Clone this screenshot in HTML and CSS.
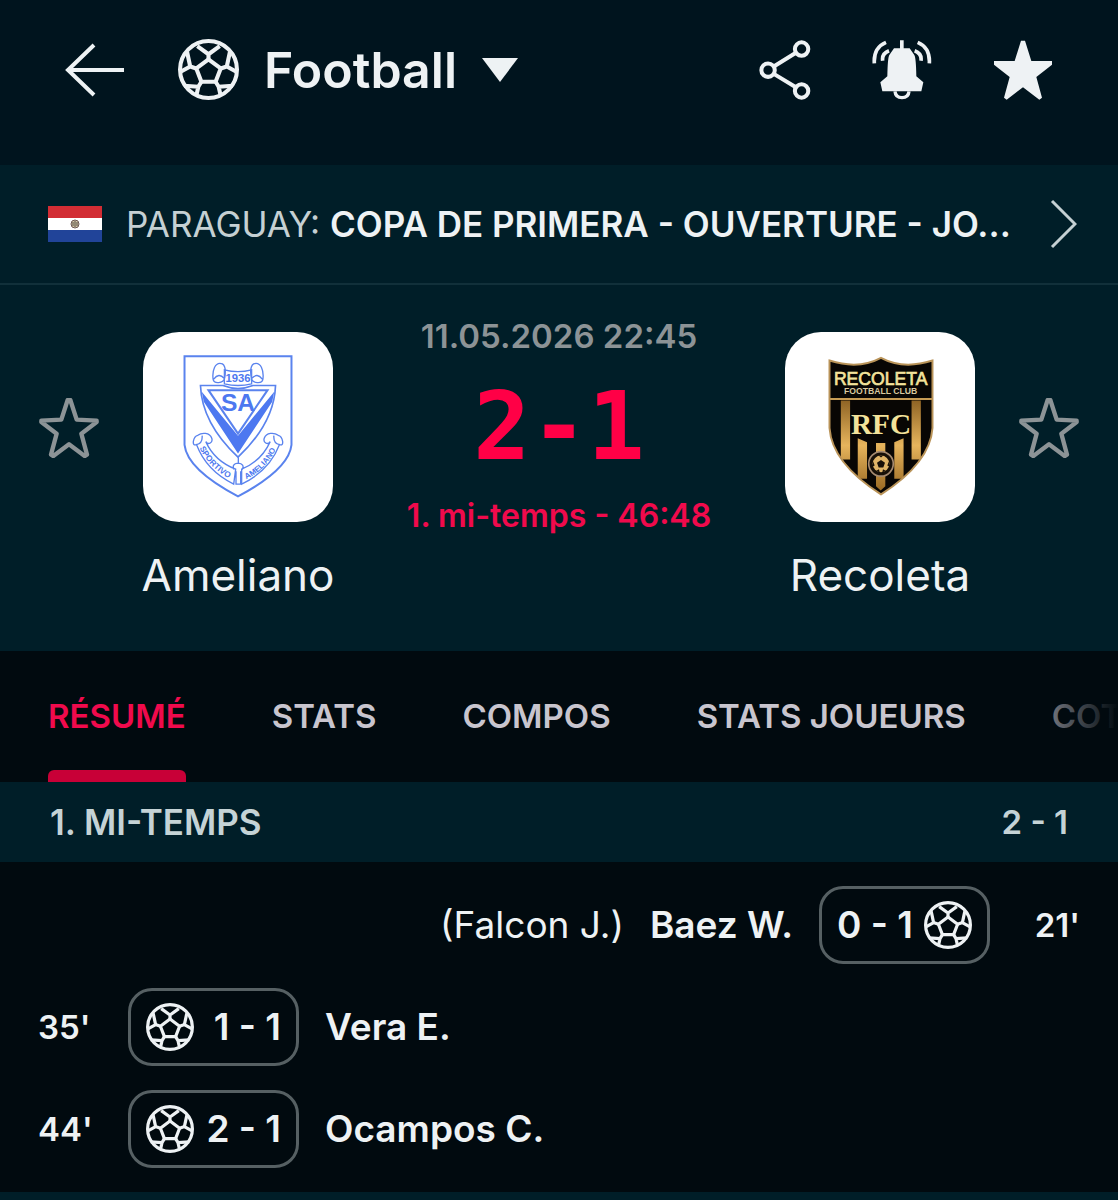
FILE: index.html
```
<!DOCTYPE html>
<html lang="fr">
<head>
    <meta charset="UTF-8">
    <meta name="viewport" content="width=device-width, initial-scale=1.0">
    <title>Ameliano - Recoleta</title>
    <link rel="stylesheet" href="styles.css">
</head>
<body>
    <svg class="defs" width="0" height="0" aria-hidden="true">
        <symbol id="ball" viewBox="0 0 60 60">
            <g fill="none" stroke="currentColor" stroke-width="4" stroke-linejoin="round">
                <circle cx="30" cy="30" r="28"/>
                <path d="M30 20 42 29 37 42H23L18 29Z"/>
                <path d="M30 20V15M19 7 30 15 41 7M42 29 48 27M51 13 48 27 57 32M37 42 40 47M54 46 40 47 42 56M23 42 20 47M6 46 20 47 18 56M18 29 12 27M9 13 12 27 3 32"/>
            </g>
        </symbol>
        <symbol id="star-outline" viewBox="752 232 180 180">
            <path d="M838 238H846L865 297 925 300V304L879 339 896 402 889 406 842 371 795 406 788 402 805 339 759 304V300L819 297Z" fill="none" stroke="currentColor" stroke-width="13" stroke-linejoin="round"/>
        </symbol>
    </svg>

    <header class="topbar">
        <button class="icon-btn back" aria-label="Retour">
            <svg width="60" height="54" viewBox="0 0 60 54" fill="none" stroke="currentColor" stroke-width="4"><path d="M29 2 3 27 29 52M3 27H59"/></svg>
        </button>
        <button class="sport">
            <svg width="61" height="61"><use href="#ball"/></svg>
            <span>Football</span>
            <svg width="36" height="24" viewBox="0 0 36 24"><path d="M0 0H36L18 24Z" fill="currentColor"/></svg>
        </button>
        <div class="actions">
            <button class="icon-btn" aria-label="Partager">
                <svg width="52" height="60" viewBox="56 59 155 179" fill="none" stroke="currentColor" stroke-width="12">
                    <circle cx="183" cy="86" r="20"/>
                    <circle cx="83" cy="149" r="20"/>
                    <circle cx="183" cy="211" r="20"/>
                    <path d="M100 138 166 97M100 160 166 200"/>
                </svg>
            </button>
            <button class="icon-btn" aria-label="Notifications">
                <svg width="60" height="60" viewBox="401 59 180 180" fill="none" stroke="currentColor">
                    <path d="M485 60H496V84H514L528 104Q533 112 534 168L555 186 549 213H432L426 186 447 168Q448 112 453 104L467 84H485Z" fill="currentColor" stroke="none"/>
                    <path d="M470 213C471 225 478 232 491 232S511 225 512 213" stroke-width="10"/>
                    <path d="M443 66Q405 82 408 129M452 91Q430 99 433 121M538 66Q576 82 573 129M529 91Q551 99 548 121" stroke-width="11"/>
                </svg>
            </button>
            <button class="icon-btn" aria-label="Favori">
                <svg width="60" height="60" viewBox="758 58 180 180"><path d="M842 60H854L873 121H935V132L888 169 905 231 897 237 848 200 799 237 791 231 808 169 761 132V121H823Z" fill="currentColor"/></svg>
            </button>
        </div>
    </header>

    <a class="league" href="#">
        <svg class="flag" width="54" height="36" viewBox="0 0 54 36" role="img" aria-label="Paraguay">
            <rect width="54" height="36" fill="#fff"/>
            <rect width="54" height="12" fill="#d22d34"/>
            <rect y="24" width="54" height="12" fill="#214499"/>
            <circle cx="27" cy="18" r="4" fill="#d8c9a8" stroke="#6d5a55"/>
            <path d="M25 16V20M27 15V21M29 16V20" stroke="#4e4a42"/>
        </svg>
        <span class="league-name">PARAGUAY: <strong>COPA DE PRIMERA - OUVERTURE - JO...</strong></span>
        <svg width="27" height="50" viewBox="0 0 27 50"><path d="M2 2 25 25 2 48" fill="none" stroke="currentColor" stroke-width="3"/></svg>
    </a>

    <section class="match">
        <button class="icon-btn fav" aria-label="Suivre Ameliano"><svg width="60" height="60"><use href="#star-outline"/></svg></button>
        <div class="team">
            <div class="crest">
                <svg viewBox="39 36 572 572" fill="none" stroke="#5a83ee" stroke-width="4">
                    <path d="M164 109H486V376Q478 450 325 531Q172 450 164 376Z" stroke-width="6"/>
                    <path d="M284 150Q325 161 366 150V192Q325 202 284 192ZM278 132C255 124 247 154 250 178C252 193 281 192 285 174C288 157 287 138 278 132ZM372 132C395 124 403 154 400 178C398 193 369 192 365 174C362 157 363 138 372 132ZM252 178Q267 157 284 176M398 178Q383 157 366 176"/>
                    <path d="M212 197H280Q325 215 370 197H438Q434 310 325 413Q216 310 212 197Z" stroke-width="5"/>
                    <path d="M216 216 325 348 434 216 428 246 325 402 222 246Z" fill="#4d78f0" stroke="none"/>
                    <path d="M236 211H414L325 342Z" fill="#fff" stroke-width="6"/>
                    <path d="M326 413V433M200 375C184 382 190 350 204 347C216 338 240 338 246 356C250 368 236 378 228 366Q254 424 318 449L312 494Q230 454 200 375ZM200 375Q219 372 217 348M450 375C466 382 460 350 446 347C434 338 410 338 404 356C400 368 414 378 422 366Q396 424 336 449V494Q420 454 450 375ZM450 375Q431 372 433 348M313 450Q305 433 325 431Q346 433 338 450M319 455V494H333V455"/>
                    <path id="ribbon-left" d="M209 385Q236 443 300 478" stroke="none"/>
                    <path id="ribbon-right" d="M350 479Q414 448 444 379" stroke="none"/>
                    <g fill="#4d78f0" stroke="none" font-family="Liberation Sans, Arial, sans-serif">
                        <text x="325" y="186" font-size="34" font-weight="bold" text-anchor="middle">1936</text>
                        <text x="325" y="275" font-size="74" font-weight="bold" text-anchor="middle">SA</text>
                        <text font-size="25" font-weight="bold"><textPath href="#ribbon-left">SPORTIVO</textPath></text>
                        <text font-size="24" font-weight="bold"><textPath href="#ribbon-right">AMELIANO</textPath></text>
                    </g>
                </svg>
            </div>
            <h2>Ameliano</h2>
        </div>
        <div class="score">
            <time datetime="2026-05-11T22:45">11.05.2026 22:45</time>
            <div class="result">2-1</div>
            <div class="status">1. mi-temps - 46:48</div>
        </div>
        <div class="team">
            <div class="crest">
                <svg viewBox="43 36 572 572">
                    <defs>
                        <linearGradient id="gold" x1="0" y1="0" x2="0" y2="1">
                            <stop offset="0" stop-color="#8f6425"/>
                            <stop offset="0.5" stop-color="#e6b45c"/>
                            <stop offset="1" stop-color="#9a6a24"/>
                        </linearGradient>
                        <clipPath id="shield"><path d="M177 122Q265 150 332 114Q399 150 487 122V325Q480 430 332 525Q184 430 177 325Z"/></clipPath>
                    </defs>
                    <g clip-path="url(#shield)">
                        <path d="M170 100H500V540H170Z" fill="#080604"/>
                        <path d="M211 242H239V420H211ZM424 242H452V420H424ZM262 356 290 368V478H262ZM372 368 400 356V478H372ZM317 370H345V500L331 513 317 500Z" fill="url(#gold)"/>
                        <path d="M177 238H487" stroke="#c79c55" stroke-width="6"/>
                    </g>
                    <path d="M177 122Q265 150 332 114Q399 150 487 122V325Q480 430 332 525Q184 430 177 325Z" fill="none" stroke="#b99358" stroke-width="6"/>
                    <circle cx="332" cy="433" r="37" fill="#171008" stroke="#a58a70" stroke-width="5"/>
                    <circle cx="332" cy="433" r="25" fill="#e0b568"/>
                    <path d="M332 421 344 430 339 444H325L320 430ZM325 408H339L332 414ZM308 425 313 438 307 441ZM356 425 351 438 357 441ZM318 454 326 449 328 459ZM346 454 338 449 336 459Z" fill="#171008"/>
                    <g fill="#f3e39b" text-anchor="middle">
                        <text x="331" y="195" font-family="Liberation Sans, Arial, sans-serif" font-size="53" stroke="#f3e39b" stroke-width="2">RECOLETA</text>
                        <text x="331" y="222" font-family="Liberation Sans, Arial, sans-serif" font-size="26" font-weight="bold" fill="#d8c9a0">FOOTBALL CLUB</text>
                        <text x="332" y="342" font-family="Liberation Serif, serif" font-size="88" font-weight="bold">RFC</text>
                    </g>
                </svg>
            </div>
            <h2>Recoleta</h2>
        </div>
        <button class="icon-btn fav" aria-label="Suivre Recoleta"><svg width="60" height="60"><use href="#star-outline"/></svg></button>
    </section>

    <nav class="tabs">
        <a class="active" href="#">RÉSUMÉ</a>
        <a href="#">STATS</a>
        <a href="#">COMPOS</a>
        <a href="#">STATS JOUEURS</a>
        <a href="#">COTES</a>
    </nav>

    <main>
        <div class="period">
            <h3>1. MI-TEMPS</h3>
            <span>2 - 1</span>
        </div>
        <ol class="events">
            <li class="away">
                <span class="minute">21'</span>
                <span class="goal"><svg width="48" height="48"><use href="#ball"/></svg><span>0 - 1</span></span>
                <strong>Baez W.</strong>
                <span class="assist">(Falcon J.)</span>
            </li>
            <li>
                <span class="minute">35'</span>
                <span class="goal"><svg width="48" height="48"><use href="#ball"/></svg><span>1 - 1</span></span>
                <strong>Vera E.</strong>
            </li>
            <li>
                <span class="minute">44'</span>
                <span class="goal"><svg width="48" height="48"><use href="#ball"/></svg><span>2 - 1</span></span>
                <strong>Ocampos C.</strong>
            </li>
        </ol>
    </main>
</body>
</html>
```
FILE: styles.css
```
* {
    box-sizing: border-box;
}
body {
    margin: 0;
    min-height: 100vh;
    background-color: #001e28;
    color: #eef2f4;
    font-family: Inter, sans-serif;
    font-size: 33px;
    line-height: 40px;
}
h2, h3 {
    margin: 0;
}
svg {
    display: block;
    flex-shrink: 0;
}
.defs {
    position: absolute;
}
button {
    padding: 0;
    border: none;
    background: none;
    color: inherit;
    font: inherit;
    cursor: pointer;
}
a {
    color: inherit;
    text-decoration: none;
}

.topbar {
    display: flex;
    align-items: center;
    padding: 39px 65px 65px;
    background-color: #00141e;
}
.sport {
    display: flex;
    align-items: center;
    gap: 25px;
    margin-left: 53px;
    font-size: 50px;
    font-weight: 600;
    line-height: 60px;
}
.actions {
    display: flex;
    gap: 61px;
    margin-left: auto;
}

.league {
    display: flex;
    align-items: center;
    gap: 24px;
    padding: 34px 41px 34px 48px;
    border-bottom: 2px solid #11303a;
    color: #c5d0d3;
    font-size: 35px;
}
.league-name {
    flex: 1;
    min-width: 0;
    overflow: hidden;
    white-space: nowrap;
    text-overflow: ellipsis;
}
.league-name strong {
    color: #eef2f4;
    font-weight: 600;
}

.match {
    display: flex;
    align-items: flex-start;
    padding: 31px 39px 49px;
}
.fav {
    margin-top: 82px;
    color: #8c9396;
}
.team {
    width: 190px;
    margin: 16px 44px 0;
    text-align: center;
}
.crest {
    height: 190px;
    border-radius: 36px;
    background-color: #fff;
}
.team h2 {
    display: flex;
    justify-content: center;
    margin-top: 26px;
    font-size: 44px;
    font-weight: 400;
    line-height: 54px;
}
.score {
    display: flex;
    flex: 1;
    flex-direction: column;
    align-items: center;
    gap: 20px;
    color: #ff0046;
    font-weight: 600;
    white-space: nowrap;
}
.score time {
    color: #8c9396;
}
.result {
    font-family: "DejaVu Sans Mono", monospace;
    font-size: 95px;
    font-weight: 700;
    line-height: 100px;
}
.status {
    color: #f00a4c;
    font-size: 32px;
}

.tabs {
    position: relative;
    display: flex;
    gap: 86px;
    padding: 0 48px;
    overflow: hidden;
    background-color: #010a0f;
    color: #c8c5ce;
    font-weight: 600;
    white-space: nowrap;
}
/* fade over the tabs that run off the right edge */
.tabs::after {
    content: "";
    position: absolute;
    top: 0;
    right: 0;
    bottom: 0;
    width: 120px;
    background: linear-gradient(to left, #010a0f, transparent);
    pointer-events: none;
}
.tabs a {
    padding: 45px 0 46px;
}
.tabs .active {
    position: relative;
    color: #f00a4c;
}
.tabs .active::after {
    content: "";
    position: absolute;
    right: 0;
    bottom: 0;
    left: 0;
    height: 12px;
    border-radius: 6px 6px 0 0;
    background-color: #c80037;
}

.period {
    display: flex;
    justify-content: space-between;
    padding: 20px 50px;
    color: #c5d3d6;
    font-weight: 600;
}
.period h3 {
    font-size: 35px;
    font-weight: 600;
}
.events {
    display: flex;
    flex-direction: column;
    gap: 24px;
    margin: 0;
    padding: 24px 38px;
    background-color: #010a0f;
    font-size: 37px;
    list-style: none;
}
.events li {
    display: flex;
    align-items: center;
    gap: 26px;
}
.events .away {
    flex-direction: row-reverse;
}
.events strong {
    font-weight: 600;
}
.minute {
    width: 64px;
    font-size: 33px;
    font-weight: 600;
}
.away .minute {
    text-align: right;
}
.goal {
    display: flex;
    align-items: center;
    justify-content: space-between;
    width: 171px;
    height: 78px;
    padding: 0 15px;
    border: 3px solid #566063;
    border-radius: 24px;
    font-weight: 600;
}
.away .goal {
    flex-direction: row-reverse;
}
```
